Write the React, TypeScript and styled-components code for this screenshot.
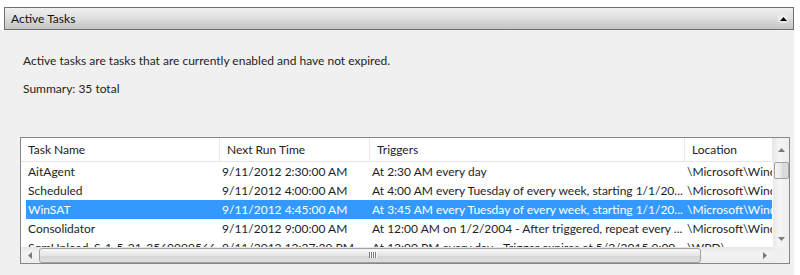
import React from "react";
import styled, { createGlobalStyle } from "styled-components";

const Global = createGlobalStyle`
  html, body { margin: 0; padding: 0; background: #ffffff; }
  body { font-family: Lato, "Open Sans", "Liberation Sans", sans-serif; font-size: 12px; color: #1e1e1e; }
  #root { width: 800px; height: 275px; overflow: hidden; }
`;

const Page = styled.div`
  width: 800px;
  height: 275px;
  padding-top: 7px;
  box-sizing: border-box;
  display: flex;
  flex-direction: column;
`;

const HeaderBar = styled.div`
  margin-left: 4px;
  width: 790px;
  height: 23px;
  box-sizing: border-box;
  border: 1px solid #6f6f6f;
  background: linear-gradient(#efefef 0%, #e0e0e0 45%, #c4c4c4 100%);
  display: flex;
  align-items: center;
  justify-content: space-between;
  padding: 0 3px 0 6px;
`;

const HeaderTitle = styled.span`
  font-size: 12px;
  color: #111;
`;

const CollapseButton = styled.span`
  width: 14px;
  height: 12px;
  display: flex;
  align-items: center;
  justify-content: center;
  border-radius: 3px;
  background: radial-gradient(rgba(255,255,255,0.9), rgba(255,255,255,0) 70%);
`;

const Body = styled.div`
  width: 794px;
  flex: 1;
  background: #f0f0f0;
  padding: 23px 0 0 20px;
  box-sizing: border-box;
`;

const Para = styled.div<{ $gap?: number }>`
  margin-left: 3px;
  line-height: 16px;
  margin-top: ${(p) => p.$gap ?? 0}px;
`;

const Frame = styled.div`
  margin-top: 40px;
  width: 770px;
  height: 127px;
  box-sizing: border-box;
  border: 1px solid #828790;
  background: #ffffff;
  display: grid;
  grid-template-columns: 752px 16px;
  grid-template-rows: 109px 16px;
`;

const List = styled.div`
  overflow: hidden;
  display: flex;
  flex-direction: column;
`;

const HeadRow = styled.div`
  display: flex;
  height: 24px;
  flex: none;
  box-sizing: border-box;
  border-bottom: 1px solid #e5e5e5;
`;

const HeadCell = styled.div<{ $w: number }>`
  width: ${(p) => p.$w}px;
  flex: none;
  box-sizing: border-box;
  padding-left: 7px;
  display: flex;
  align-items: center;
  border-right: 1px solid #e8e8e8;
  white-space: nowrap;
  overflow: hidden;
  color: #222;
`;

const Row = styled.div<{ $sel?: boolean }>`
  display: flex;
  height: 19px;
  flex: none;
  margin-left: 5px;
  margin-right: 1px;
  background: ${(p) => (p.$sel ? "#3399ff" : "transparent")};
  color: ${(p) => (p.$sel ? "#ffffff" : "#1e1e1e")};
`;

const Cell = styled.div<{ $w: number }>`
  width: ${(p) => p.$w}px;
  flex: none;
  box-sizing: border-box;
  padding-left: 2px;
  padding-right: 4px;
  display: flex;
  align-items: center;
  white-space: nowrap;
  overflow: hidden;
  line-height: 19px;
`;

const VScroll = styled.div`
  background: linear-gradient(90deg, #e8e8e8, #f5f5f5 40%, #eeeeee);
  display: flex;
  flex-direction: column;
  align-items: center;
`;

const HScroll = styled.div`
  background: linear-gradient(#e6e6e6, #f4f4f4 40%, #ececec);
  display: flex;
  align-items: center;
`;

const Corner = styled.div`
  background: #f0f0f0;
`;

const ArrowBox = styled.div<{ $w: number; $h: number }>`
  width: ${(p) => p.$w}px;
  height: ${(p) => p.$h}px;
  flex: none;
  display: flex;
  align-items: center;
  justify-content: center;
`;

const HThumb = styled.div`
  width: 662px;
  height: 15px;
  box-sizing: border-box;
  border: 1px solid #a0a0a0;
  border-radius: 3px;
  background: linear-gradient(#f6f6f6, #e6e6e6 50%, #d6d6d6 51%, #dedede);
  display: flex;
  align-items: center;
  justify-content: center;
  margin-left: 1px;
`;

const VThumb = styled.div`
  width: 15px;
  height: 17px;
  box-sizing: border-box;
  border: 1px solid #a0a0a0;
  border-radius: 2px;
  background: linear-gradient(90deg, #f6f6f6, #e6e6e6 50%, #d6d6d6 51%, #dedede);
`;

const VSpacer = styled.div`
  flex: 1;
`;

const Grip = styled.div`
  display: flex;
  gap: 1px;
  margin-left: 4px;
  span {
    width: 1px;
    height: 6px;
    background: #7d7d7d;
    box-shadow: 1px 0 0 #fafafa;
  }
`;

const cols = [199, 150, 315, 88];

const rows: [string, string, string, string][] = [
  ["AitAgent", "9/11/2012 2:30:00 AM", "At 2:30 AM every day", "\\Microsoft\\Windows\\Application Experience"],
  ["Scheduled", "9/11/2012 4:00:00 AM", "At 4:00 AM every Tuesday of every week, starting 1/1/20...", "\\Microsoft\\Windows\\Defrag"],
  ["WinSAT", "9/11/2012 4:45:00 AM", "At 3:45 AM every Tuesday of every week, starting 1/1/20...", "\\Microsoft\\Windows\\Maintenance"],
  ["Consolidator", "9/11/2012 9:00:00 AM", "At 12:00 AM on 1/2/2004 - After triggered, repeat every ...", "\\Microsoft\\Windows\\Customer Experience"],
  ["SqmUpload_S-1-5-21-3569999566", "9/11/2012 12:27:39 PM", "At 12:00 PM every day - Trigger expires at 5/2/2015 9:00...", "\\WPD\\"],
];

const Tri = ({ dir, color = "#7a7a7a" }: { dir: "up" | "down" | "left" | "right"; color?: string }) => {
  const pts = {
    up: "0,4 7,4 3.5,0",
    down: "0,0 7,0 3.5,4",
    left: "4,0 4,7 0,3.5",
    right: "0,0 0,7 4,3.5",
  }[dir];
  const horiz = dir === "up" || dir === "down";
  return (
    <svg width={horiz ? 7 : 4} height={horiz ? 4 : 7} viewBox={horiz ? "0 0 7 4" : "0 0 4 7"}>
      <polygon points={pts} fill={color} />
    </svg>
  );
};

export default function App() {
  return (
    <>
      <Global />
      <Page>
        <HeaderBar>
          <HeaderTitle>Active Tasks</HeaderTitle>
          <CollapseButton>
            <Tri dir="up" color="#000" />
          </CollapseButton>
        </HeaderBar>
        <Body>
          <Para>Active tasks are tasks that are currently enabled and have not expired.</Para>
          <Para $gap={12}>Summary: 35 total</Para>
          <Frame>
            <List>
              <HeadRow>
                <HeadCell $w={cols[0]}>Task Name</HeadCell>
                <HeadCell $w={cols[1]}>Next Run Time</HeadCell>
                <HeadCell $w={cols[2]}>Triggers</HeadCell>
                <HeadCell $w={cols[3]}>Location</HeadCell>
              </HeadRow>
              {rows.map((r, i) => (
                <Row key={i} $sel={i === 2}>
                  <Cell $w={cols[0] - 5}>{r[0]}</Cell>
                  <Cell $w={cols[1]}>{r[1]}</Cell>
                  <Cell $w={cols[2]}>{r[2]}</Cell>
                  <Cell $w={cols[3] - 1}>{r[3]}</Cell>
                </Row>
              ))}
            </List>
            <VScroll>
              <ArrowBox $w={16} $h={24}>
                <Tri dir="up" />
              </ArrowBox>
              <VThumb />
              <VSpacer />
              <ArrowBox $w={16} $h={16}>
                <Tri dir="down" />
              </ArrowBox>
            </VScroll>
            <HScroll>
              <ArrowBox $w={17} $h={16}>
                <Tri dir="left" />
              </ArrowBox>
              <HThumb>
                <Grip>
                  <span />
                  <span />
                  <span />
                  <span />
                </Grip>
              </HThumb>
              <VSpacer />
              <ArrowBox $w={17} $h={16}>
                <Tri dir="right" />
              </ArrowBox>
            </HScroll>
            <Corner />
          </Frame>
        </Body>
      </Page>
    </>
  );
}
